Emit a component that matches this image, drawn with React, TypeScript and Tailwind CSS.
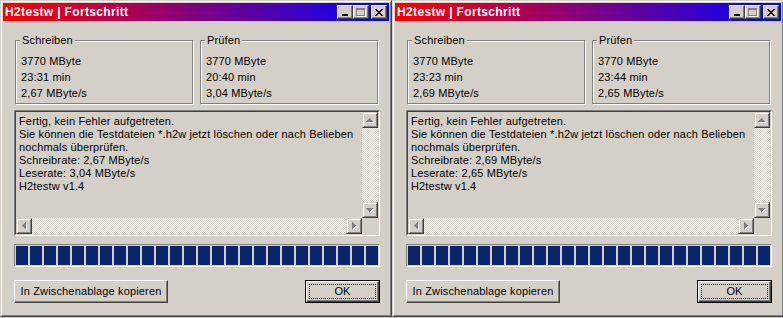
import React from 'react';

interface Run {
  write: string[];
  check: string[];
  wrate: string;
  rrate: string;
}

const runs: Run[] = [
  { write: ['3770 MByte', '23:31 min', '2,67 MByte/s'], check: ['3770 MByte', '20:40 min', '3,04 MByte/s'], wrate: '2,67', rrate: '3,04' },
  { write: ['3770 MByte', '23:23 min', '2,69 MByte/s'], check: ['3770 MByte', '23:44 min', '2,65 MByte/s'], wrate: '2,69', rrate: '2,65' },
];

const font = { fontFamily: '"Liberation Sans", Arial, sans-serif' };

// kleiner Pfeil (grau, deaktiviert) mit weissem Schatten
const Arrow = ({ dir }: { dir: 'up' | 'down' | 'left' | 'right' }) => {
  const rows = [0, 1, 2, 3];
  const rect = (i: number, dx: number, fill: string) => {
    const len = 2 * i + 1;
    const off = 3 - i;
    if (dir === 'up') return <rect key={fill + i} x={off + dx} y={i + dx} width={len} height={1} fill={fill} />;
    if (dir === 'down') return <rect key={fill + i} x={off + dx} y={3 - i + dx} width={len} height={1} fill={fill} />;
    if (dir === 'left') return <rect key={fill + i} x={i + dx} y={off + dx} width={1} height={len} fill={fill} />;
    return <rect key={fill + i} x={3 - i + dx} y={off + dx} width={1} height={len} fill={fill} />;
  };
  const horiz = dir === 'up' || dir === 'down';
  return (
    <svg width={horiz ? 8 : 5} height={horiz ? 5 : 8} shapeRendering="crispEdges">
      {rows.map((i) => rect(i, 1, '#ffffff'))}
      {rows.map((i) => rect(i, 0, '#808080'))}
    </svg>
  );
};

const ScrollBtn = ({ dir }: { dir: 'up' | 'down' | 'left' | 'right' }) => (
  <div className="w-[16px] h-[16px] shrink-0 bg-[#d4d0c8] border border-t-[#d4d0c8] border-l-[#d4d0c8] border-r-[#404040] border-b-[#404040] shadow-[inset_1px_1px_0_#fff,inset_-1px_-1px_0_#808080] flex items-center justify-center">
    <Arrow dir={dir} />
  </div>
);

const Checker = ({ className }: { className: string }) => (
  <div className={`${className} bg-[repeating-conic-gradient(#ffffff_0%_25%,#d4d0c8_0%_50%)] bg-[length:2px_2px]`} />
);

const CapBtn = ({ children, ml }: { children: React.ReactNode; ml?: string }) => (
  <div className={`w-[16px] h-[14px] bg-[#d4d0c8] border border-t-white border-l-white border-r-[#404040] border-b-[#404040] shadow-[inset_-1px_-1px_0_#808080] flex items-center justify-center ${ml ?? ''}`}>
    {children}
  </div>
);

const Group = ({ label, lines }: { label: string; lines: string[] }) => (
  <div className="relative w-[178px] h-[64px] border border-[#808080] shadow-[1px_1px_0_#fff,inset_1px_1px_0_#fff] pl-[5px] pt-[12px]">
    <span className="absolute -top-[7px] left-[4px] px-[2px] bg-[#d4d0c8] leading-[13px]">{label}</span>
    {lines.map((l) => (
      <div key={l} className="leading-[16px]">{l}</div>
    ))}
  </div>
);

const Window = ({ run }: { run: Run }) => {
  const log = [
    'Fertig, kein Fehler aufgetreten.',
    'Sie können die Testdateien *.h2w jetzt löschen oder nach Belieben',
    'nochmals überprüfen.',
    `Schreibrate: ${run.wrate} MByte/s`,
    `Leserate: ${run.rrate} MByte/s`,
    'H2testw v1.4',
  ];

  return (
    <div className="w-[392px] h-[317px] shrink-0 border border-t-[#d4d0c8] border-l-[#d4d0c8] border-r-[#404040] border-b-[#404040]">
      <div className="h-full border border-t-white border-l-white border-r-[#808080] border-b-[#808080] p-[1px] flex flex-col">
        {/* Titelleiste */}
        <div className="h-[18px] shrink-0 flex items-center pl-[2px] pr-[2px] bg-[linear-gradient(to_right,#ff0000,#0000ff)]">
          <span className="flex-1 text-white font-bold text-[12px] leading-[18px] tracking-[0.35px]">H2testw | Fortschritt</span>
          <CapBtn>
            <div className="w-[6px] h-[2px] bg-black mt-[6px] -ml-[1px]" />
          </CapBtn>
          <CapBtn>
            <div className="w-[9px] h-[8px] border border-t-2 border-[#808080] shadow-[1px_1px_0_#fff] -mt-[1px] -ml-[1px]" />
          </CapBtn>
          <CapBtn ml="ml-[2px]">
            <svg width="8" height="7" shapeRendering="crispEdges" className="-ml-[1px]">
              {[0, 1, 2, 3, 4, 5, 6].map((i) => (
                <g key={i}>
                  <rect x={i} y={i} width={2} height={1} fill="#000" />
                  <rect x={6 - i} y={i} width={2} height={1} fill="#000" />
                </g>
              ))}
            </svg>
          </CapBtn>
        </div>

        {/* Inhalt */}
        <div className="flex-1 flex flex-col pl-[11px] pt-[19px] text-[11px] text-black tracking-[0.15px]">
          <div className="flex gap-[7px] ml-[1px]">
            <Group label="Schreiben" lines={run.write} />
            <Group label="Prüfen" lines={run.check} />
          </div>

          {/* Ausgabefeld */}
          <div className="mt-[6px] w-[366px] h-[126px] border border-t-[#808080] border-l-[#808080] border-r-white border-b-white">
            <div className="h-full border border-t-[#404040] border-l-[#404040] border-r-[#d4d0c8] border-b-[#d4d0c8] flex flex-col">
              <div className="flex-1 flex min-h-0">
                <div className="flex-1 overflow-hidden pl-[3px] pt-[3px] whitespace-nowrap">
                  {log.map((l) => (
                    <div key={l} className="leading-[13px]">{l}</div>
                  ))}
                </div>
                <div className="w-[16px] flex flex-col">
                  <ScrollBtn dir="up" />
                  <Checker className="flex-1" />
                  <ScrollBtn dir="down" />
                </div>
              </div>
              <div className="h-[16px] flex">
                <ScrollBtn dir="left" />
                <Checker className="flex-1" />
                <ScrollBtn dir="right" />
                <div className="w-[16px] bg-[#d4d0c8]" />
              </div>
            </div>
          </div>

          {/* Fortschrittsbalken */}
          <div className="mt-[8px] w-[366px] h-[23px] border border-t-[#808080] border-l-[#808080] border-r-white border-b-white p-[1px] flex gap-[2px]">
            {Array.from({ length: 26 }).map((_, i) => (
              <div key={i} className="w-[12px] h-full bg-[#0a246a]" />
            ))}
          </div>

          {/* Buttons */}
          <div className="mt-[13px] w-[366px] flex justify-between">
            <div className="w-[154px] h-[23px] border border-t-white border-l-white border-r-[#404040] border-b-[#404040] shadow-[inset_-1px_-1px_0_#808080] flex items-center justify-center">
              In Zwischenablage kopieren
            </div>
            <div className="w-[75px] h-[23px] border border-black">
              <div className="h-full border border-t-white border-l-white border-r-[#404040] border-b-[#404040] shadow-[inset_-1px_-1px_0_#808080] p-[2px]">
                <div className="h-full border border-dotted border-black flex items-center justify-center">OK</div>
              </div>
            </div>
          </div>
        </div>
      </div>
    </div>
  );
};

export default function App() {
  return (
    <div className="w-[783px] h-[318px] overflow-hidden bg-[#d4d0c8] flex" style={font}>
      {runs.map((r, i) => (
        <Window key={i} run={r} />
      ))}
    </div>
  );
}
